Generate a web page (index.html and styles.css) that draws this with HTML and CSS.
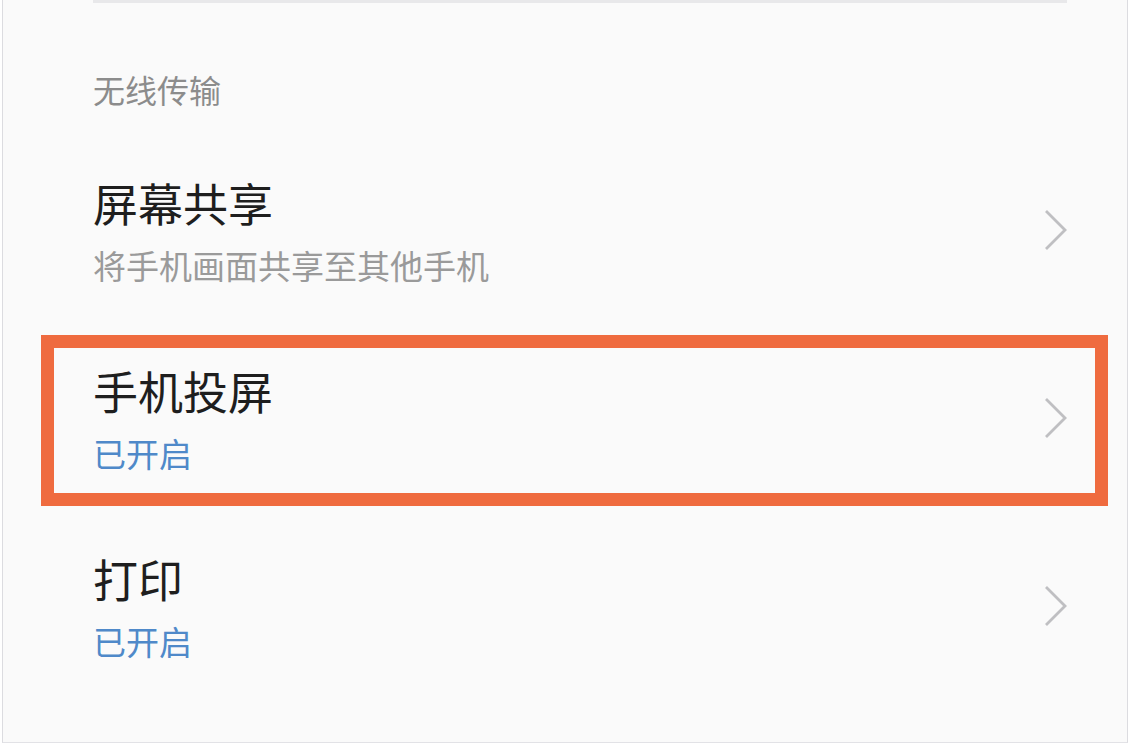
FILE: index.html
```html
<!DOCTYPE html>
<html lang="zh-CN">
<head>
    <meta charset="UTF-8">
    <meta name="viewport" content="width=device-width, initial-scale=1.0">
    <title>无线传输</title>
    <link rel="stylesheet" href="styles.css">
</head>
<body>
    <div class="screen">
        <div class="list">
            <div class="divider-top"></div>
            <h2 class="section-title">无线传输</h2>

            <div class="item">
                <div class="item-text">
                    <div class="item-title">屏幕共享</div>
                    <div class="item-sub">将手机画面共享至其他手机</div>
                </div>
                <svg class="chevron" viewBox="0 0 24 42"><polyline points="2,2 21,21 2,40"/></svg>
            </div>

            <div class="item item-marked">
                <div class="item-text">
                    <div class="item-title">手机投屏</div>
                    <div class="item-sub item-sub-on">已开启</div>
                </div>
                <svg class="chevron" viewBox="0 0 24 42"><polyline points="2,2 21,21 2,40"/></svg>
                <div class="highlight"></div>
            </div>

            <div class="item">
                <div class="item-text">
                    <div class="item-title">打印</div>
                    <div class="item-sub item-sub-on">已开启</div>
                </div>
                <svg class="chevron" viewBox="0 0 24 42"><polyline points="2,2 21,21 2,40"/></svg>
            </div>
        </div>
    </div>
</body>
</html>
```

FILE: styles.css
```css
* {
    box-sizing: border-box;
}

body {
    margin: 0;
    background: #ffffff;
    font-family: "Noto Sans CJK SC", "Noto Sans", sans-serif;
}

.screen {
    width: 1126px;
    height: 743px;
    margin-left: 2px;
    background: #fafafa;
    border-left: 1px solid #dcdce0;
    border-right: 1px solid #dcdce0;
    border-bottom: 1px solid #e2e2e6;
}

.list {
    padding: 0 60px 0 90px;
    display: flex;
    flex-direction: column;
}

.divider-top {
    height: 3px;
    background: #e8e8ea;
}

.section-title {
    margin: 64px 0 0 0;
    font-size: 32px;
    font-weight: 400;
    line-height: 44px;
    color: #8c8c8c;
}

.item {
    position: relative;
    height: 188px;
    display: flex;
    align-items: center;
    justify-content: space-between;
}

.section-title + .item {
    margin-top: 27px;
}

.item-text {
    display: flex;
    flex-direction: column;
    padding-bottom: 2px;
}

.item-title {
    font-size: 45px;
    line-height: 58px;
    color: #1e1e1e;
}

.item-sub {
    margin-top: 10px;
    font-size: 33px;
    line-height: 46px;
    color: #9a9a9a;
}

.item-sub-on {
    color: #4f89c9;
}

.chevron {
    width: 24px;
    height: 42px;
    fill: none;
    stroke: #bfbfc2;
    stroke-width: 2.8;
    margin-right: -1px;
    margin-top: -4px;
}

/* рамка-выделение поверх строки */
.highlight {
    position: absolute;
    top: 9px;
    bottom: 8px;
    left: -52px;
    right: -41px;
    border: 13px solid #ef6b3f;
    pointer-events: none;
}
```
